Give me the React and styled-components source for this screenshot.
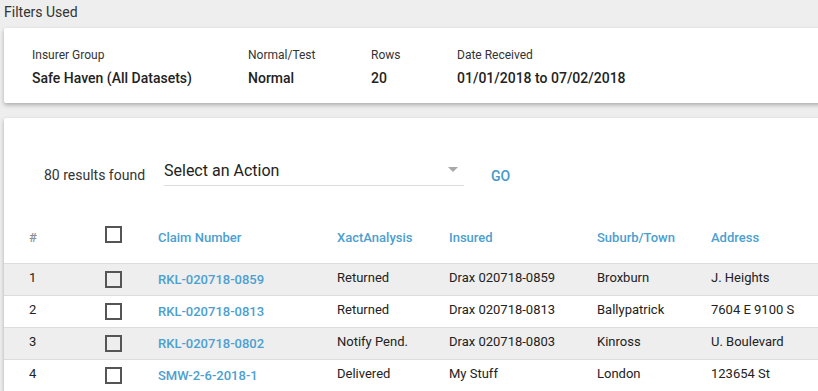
import * as React from "react";
import styled, { createGlobalStyle } from "styled-components";

const GlobalStyle = createGlobalStyle`
  html, body {
    margin: 0;
    padding: 0;
    background: #eeeeee;
    font-family: Roboto, "Liberation Sans", sans-serif;
    overflow: hidden;
  }
`;

const Page = styled.div`
  padding: 4px 0 0 4px;
  width: 830px;
`;

const SectionTitle = styled.div`
  font-size: 14px;
  line-height: 16px;
  color: #333;
  height: 24px;
`;

const Card = styled.div`
  background: #fff;
  box-shadow: 0 2px 4px rgba(0, 0, 0, 0.28);
  border-radius: 2px 0 0 2px;
`;

const FilterCard = styled(Card)`
  display: flex;
  padding: 20px 0 15px 28px;
  height: 40px;
`;

const Filter = styled.div`
  width: ${(p) => p.$w}px;
  display: flex;
  flex-direction: column;
  gap: 8px;
`;

const FilterLabel = styled.div`
  font-size: 12px;
  line-height: 14px;
  color: #333;
`;

const FilterValue = styled.div`
  font-size: 14px;
  line-height: 17px;
  font-weight: 500;
  color: #222;
`;

const ResultsCard = styled(Card)`
  margin-top: 15px;
  padding-top: 38px;
`;

const ActionBar = styled.div`
  display: flex;
  align-items: center;
  padding-left: 40px;
  height: 36px;
`;

const Count = styled.div`
  font-size: 14px;
  color: #333;
  width: 120px;
  padding-top: 2px;
`;

const Select = styled.div`
  align-self: flex-start;
  width: 300px;
  height: 30px;
  border-bottom: 1px solid #dcdcdc;
  display: flex;
  align-items: center;
  justify-content: space-between;
  box-sizing: border-box;
`;

const SelectText = styled.span`
  font-size: 16px;
  color: #222;
`;

const Caret = styled.span`
  width: 0;
  height: 0;
  border-left: 5px solid transparent;
  border-right: 5px solid transparent;
  border-top: 5px solid #a8a8a8;
  margin-right: 6px;
  margin-top: -2px;
`;

const GoButton = styled.button`
  border: none;
  background: none;
  font-family: inherit;
  font-size: 14px;
  font-weight: 500;
  color: #4299ca;
  margin-left: 27px;
  padding: 4px 0 0;
`;

const Table = styled.table`
  margin-top: 27px;
  border-collapse: collapse;
  table-layout: fixed;
  width: 826px;
`;

const Th = styled.th`
  text-align: left;
  font-weight: 500;
  font-size: 13px;
  line-height: 14px;
  color: ${(p) => (p.$muted ? "#8f8f8f" : "#4ba0d0")};
  padding: 12px 0 0 ${(p) => p.$pad || 0}px;
  height: 44px;
  box-sizing: border-box;
  vertical-align: top;
  border-bottom: 1px solid #dddddd;
`;

const Row = styled.tr`
  background: ${(p) => (p.$odd ? "#eeeeee" : "#ffffff")};
  border-bottom: 1px solid #dddddd;
`;

const Td = styled.td`
  font-size: 13px;
  color: ${(p) => (p.$link ? "#4ba0d0" : "#222")};
  font-weight: ${(p) => (p.$link ? 500 : 400)};
  padding: 0 0 ${(p) => (p.$link ? 0 : 4)}px ${(p) => p.$pad || 0}px;
  height: 32px;
  box-sizing: border-box;
  vertical-align: middle;
  white-space: nowrap;
`;

const CheckCell = styled.td`
  padding: 0;
  vertical-align: middle;
  line-height: 0;
`;

const HeadCheckCell = styled(CheckCell).attrs({ as: "th" })`
  border-bottom: 1px solid #dddddd;
  padding-top: 7px;
  vertical-align: top;
  text-align: left;
`;

const Box = styled.span`
  display: inline-block;
  width: 13px;
  height: 13px;
  border: 2px solid #555;
`;

const rows = [
  ["1", "RKL-020718-0859", "Returned", "Drax 020718-0859", "Broxburn", "J. Heights"],
  ["2", "RKL-020718-0813", "Returned", "Drax 020718-0813", "Ballypatrick", "7604 E 9100 S"],
  ["3", "RKL-020718-0802", "Notify Pend.", "Drax 020718-0803", "Kinross", "U. Boulevard"],
  ["4", "SMW-2-6-2018-1", "Delivered", "My Stuff", "London", "123654 St"],
];

export default function App() {
  return (
    <Page>
      <GlobalStyle />
      <SectionTitle>Filters Used</SectionTitle>
      <FilterCard>
        <Filter $w={216}>
          <FilterLabel>Insurer Group</FilterLabel>
          <FilterValue>Safe Haven (All Datasets)</FilterValue>
        </Filter>
        <Filter $w={123}>
          <FilterLabel>Normal/Test</FilterLabel>
          <FilterValue>Normal</FilterValue>
        </Filter>
        <Filter $w={86}>
          <FilterLabel>Rows</FilterLabel>
          <FilterValue>20</FilterValue>
        </Filter>
        <Filter $w={300}>
          <FilterLabel>Date Received</FilterLabel>
          <FilterValue>01/01/2018 to 07/02/2018</FilterValue>
        </Filter>
      </FilterCard>

      <ResultsCard>
        <ActionBar>
          <Count>80 results found</Count>
          <Select>
            <SelectText>Select an Action</SelectText>
            <Caret />
          </Select>
          <GoButton>GO</GoButton>
        </ActionBar>

        <Table>
          <colgroup>
            <col style={{ width: 101 }} />
            <col style={{ width: 53 }} />
            <col style={{ width: 179 }} />
            <col style={{ width: 112 }} />
            <col style={{ width: 148 }} />
            <col style={{ width: 114 }} />
            <col />
          </colgroup>
          <thead>
            <tr>
              <Th $muted $pad={25}>#</Th>
              <HeadCheckCell>
                <Box />
              </HeadCheckCell>
              <Th>Claim Number</Th>
              <Th>XactAnalysis</Th>
              <Th>Insured</Th>
              <Th>Suburb/Town</Th>
              <Th>Address</Th>
            </tr>
          </thead>
          <tbody>
            {rows.map((r, i) => (
              <Row key={r[0]} $odd={i % 2 === 0}>
                <Td $pad={25}>{r[0]}</Td>
                <CheckCell>
                  <Box />
                </CheckCell>
                <Td $link>{r[1]}</Td>
                <Td>{r[2]}</Td>
                <Td>{r[3]}</Td>
                <Td>{r[4]}</Td>
                <Td>{r[5]}</Td>
              </Row>
            ))}
          </tbody>
        </Table>
      </ResultsCard>
    </Page>
  );
}
